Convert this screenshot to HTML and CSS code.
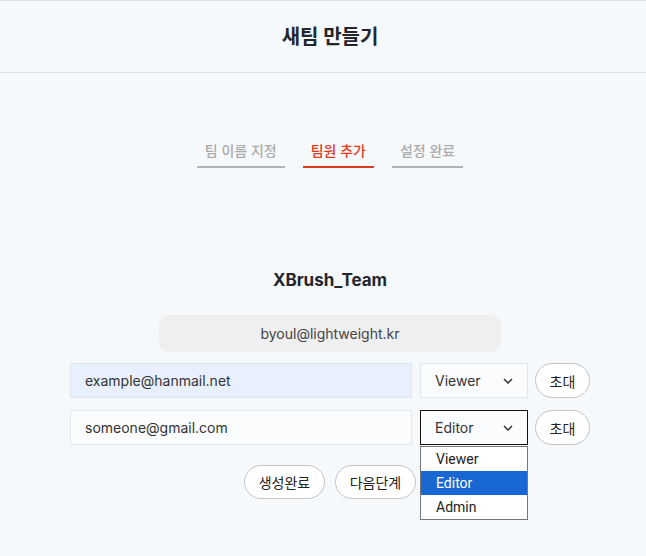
FILE: index.html
```html
<!DOCTYPE html>
<html lang="ko">
<head>
<meta charset="utf-8">
<link rel="stylesheet" href="styles.css">
</head>
<body>
<div class="page">
  <header class="header"><h1 class="title">새팀 만들기</h1></header>
  <nav class="steps">
    <div class="step">팀 이름 지정</div>
    <div class="step active">팀원 추가</div>
    <div class="step">설정 완료</div>
  </nav>
  <h2 class="team">XBrush_Team</h2>
  <div class="owner">byoul@lightweight.kr</div>
  <div class="row">
    <div class="input filled">example@hanmail.net</div>
    <div class="select">Viewer<svg class="chev" width="10" height="6" viewBox="0 0 10 6"><path d="M1 1l4 4 4-4" fill="none" stroke="#333" stroke-width="1.5"/></svg></div>
    <button class="pill invite">초대</button>
  </div>
  <div class="row">
    <div class="input">someone@gmail.com</div>
    <div class="select-wrap">
      <div class="select focused">Editor<svg class="chev" width="10" height="6" viewBox="0 0 10 6"><path d="M1 1l4 4 4-4" fill="none" stroke="#333" stroke-width="1.5"/></svg></div>
      <ul class="menu">
        <li>Viewer</li>
        <li class="sel">Editor</li>
        <li>Admin</li>
      </ul>
    </div>
    <button class="pill invite">초대</button>
  </div>
  <div class="actions">
    <button class="pill action">생성완료</button>
    <button class="pill action">다음단계</button>
  </div>
</div>
</body>
</html>
```
FILE: styles.css
```css
html, body { margin: 0; padding: 0; overflow: hidden; }
body {
  background: #f6f9fc;
  font-family: Inter, "Noto Sans CJK KR", sans-serif;
  color: #222;
  width: 646px;
  height: 556px;
}
.page {
  width: 660px;
  display: flex;
  flex-direction: column;
  align-items: center;
}
.header {
  width: 660px;
  box-sizing: border-box;
  height: 73px;
  border-top: 1px solid #dfe2e6;
  border-bottom: 1px solid #dfe2e6;
  display: flex;
  align-items: center;
  justify-content: center;
}
.title {
  margin: 0;
  font-size: 20px;
  font-weight: 700;
  color: #23262b;
  position: relative;
  top: -1px;
}
.steps {
  display: flex;
  gap: 18px;
  margin-top: 69px;
}
.step {
  font-size: 14px;
  line-height: 17px;
  font-weight: 500;
  color: #ababab;
  padding: 0 8px 7px;
  border-bottom: 2px solid #b3b3b3;
}
.step.active {
  color: #de3b1c;
  border-bottom-color: #de3b1c;
}
.team {
  margin: 102px 0 0;
  font-size: 17px;
  line-height: 20px;
  font-weight: 700;
  color: #23262b;
}
.owner {
  margin-top: 25px;
  width: 342px;
  height: 37px;
  box-sizing: border-box;
  background: #efefef;
  border-radius: 10px;
  font-size: 14px;
  color: #444;
  display: flex;
  align-items: center;
  justify-content: center;
}
.row {
  display: flex;
  align-items: center;
  margin-top: 11px;
}
.row + .row { margin-top: 12px; }
.input {
  width: 342px;
  height: 35px;
  box-sizing: border-box;
  border: 1px solid #e2e6ea;
  background: #fafcfe;
  font-size: 14px;
  color: #333;
  padding-left: 14px;
  display: flex;
  align-items: center;
}
.input.filled { background: #e8f0fe; }
.select-wrap { position: relative; margin-left: 8px; }
.select {
  width: 108px;
  height: 35px;
  box-sizing: border-box;
  border: 1px solid #e2e6ea;
  background: #fafcfe;
  font-size: 14px;
  color: #333;
  padding: 0 14px;
  display: flex;
  align-items: center;
  justify-content: space-between;
  margin-left: 8px;
}
.select-wrap .select { margin-left: 0; }
.select.focused { border-color: #111; }
.menu {
  position: absolute;
  left: 0;
  top: 36px;
  width: 108px;
  box-sizing: border-box;
  margin: 0;
  padding: 0;
  list-style: none;
  background: #fff;
  border: 1px solid #767676;
  font-family: Roboto, "Liberation Sans", sans-serif;
  font-size: 14px;
  color: #222;
}
.menu li {
  height: 24px;
  line-height: 24px;
  padding-left: 15px;
}
.menu li.sel { background: #1967d2; color: #fff; }
.pill {
  font-family: Inter, "Noto Sans CJK KR", sans-serif;
  background: #fff;
  border: 1px solid #c4c4c4;
  border-radius: 18px;
  font-size: 14px;
  color: #222;
  padding: 0;
  cursor: pointer;
}
.invite {
  width: 55px;
  height: 35px;
  margin-left: 7px;
}
.actions {
  display: flex;
  gap: 10px;
  margin-top: 20px;
}
.action {
  width: 81px;
  height: 34px;
}
```
